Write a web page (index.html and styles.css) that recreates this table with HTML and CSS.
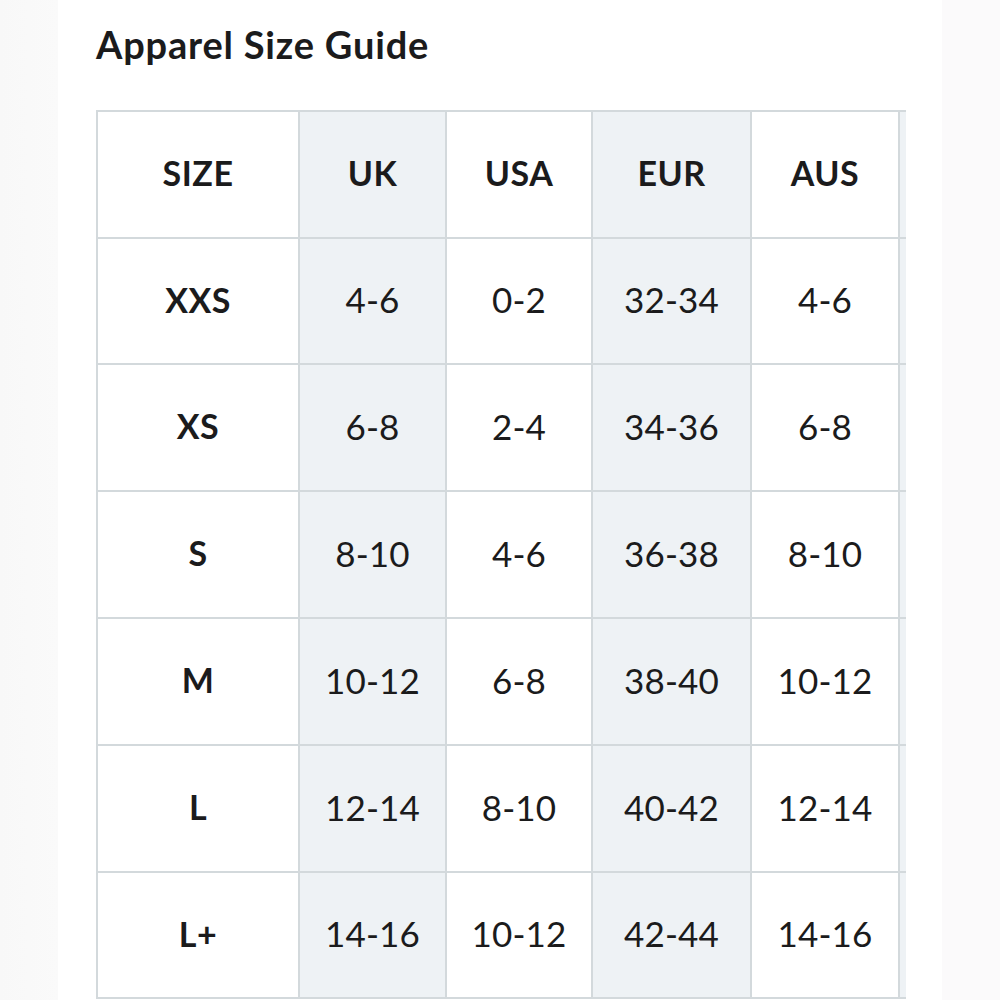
FILE: index.html
```html
<!DOCTYPE html>
<html lang="en">
<head>
<meta charset="utf-8">
<title>Apparel Size Guide</title>
<link rel="stylesheet" href="styles.css">
</head>
<body>
<main class="page">
  <h1 class="title">Apparel Size Guide</h1>
  <div class="table-clip">
    <div class="size-grid">
      <div class="cell head">SIZE</div>
      <div class="cell head shade">UK</div>
      <div class="cell head">USA</div>
      <div class="cell head shade">EUR</div>
      <div class="cell head">AUS</div>
      <div class="cell shade"></div>

      <div class="cell head">XXS</div>
      <div class="cell shade">4-6</div>
      <div class="cell">0-2</div>
      <div class="cell shade">32-34</div>
      <div class="cell">4-6</div>
      <div class="cell shade"></div>

      <div class="cell head">XS</div>
      <div class="cell shade">6-8</div>
      <div class="cell">2-4</div>
      <div class="cell shade">34-36</div>
      <div class="cell">6-8</div>
      <div class="cell shade"></div>

      <div class="cell head">S</div>
      <div class="cell shade">8-10</div>
      <div class="cell">4-6</div>
      <div class="cell shade">36-38</div>
      <div class="cell">8-10</div>
      <div class="cell shade"></div>

      <div class="cell head">M</div>
      <div class="cell shade">10-12</div>
      <div class="cell">6-8</div>
      <div class="cell shade">38-40</div>
      <div class="cell">10-12</div>
      <div class="cell shade"></div>

      <div class="cell head">L</div>
      <div class="cell shade">12-14</div>
      <div class="cell">8-10</div>
      <div class="cell shade">40-42</div>
      <div class="cell">12-14</div>
      <div class="cell shade"></div>

      <div class="cell head">L+</div>
      <div class="cell shade">14-16</div>
      <div class="cell">10-12</div>
      <div class="cell shade">42-44</div>
      <div class="cell">14-16</div>
      <div class="cell shade"></div>
    </div>
  </div>
</main>
</body>
</html>
```

FILE: styles.css
```css
html, body {
  margin: 0;
  padding: 0;
}

body {
  background: linear-gradient(to right, #f8f8f8 0, #fafafa 58px, #ffffff 58px, #ffffff 942px, #fbfafb 942px);
  font-family: Lato, "Open Sans", sans-serif;
  color: #1b1b1c;
  height: 1000px;
  overflow: hidden;
}

.page {
  width: 846px;
  margin-left: 58px;
  padding-left: 38px;
  background: #ffffff;
  height: 1000px;
}

.title {
  margin: 0;
  padding-top: 21px;
  font-size: 38px;
  line-height: 46px;
  font-weight: 700;
  letter-spacing: 0.8px;
}

.table-clip {
  margin-top: 43px;
  width: 810px;
  overflow: hidden;
}

.size-grid {
  display: grid;
  grid-template-columns: 200px 145px 144px 157px 146px 150px;
  grid-template-rows: 125px 124px 125px 125px 125px 125px 124px;
  gap: 2px;
  padding: 2px;
  background: #d3d9dc;
  width: max-content;
}

.cell {
  background: #ffffff;
  display: flex;
  align-items: center;
  justify-content: center;
  padding-bottom: 4px;
  font-size: 35px;
  font-weight: 400;
  letter-spacing: 0.2px;
}

.cell.shade {
  background: #eef2f5;
}

.cell.head {
  font-weight: 700;
  font-size: 34px;
  letter-spacing: 0.5px;
}
```
